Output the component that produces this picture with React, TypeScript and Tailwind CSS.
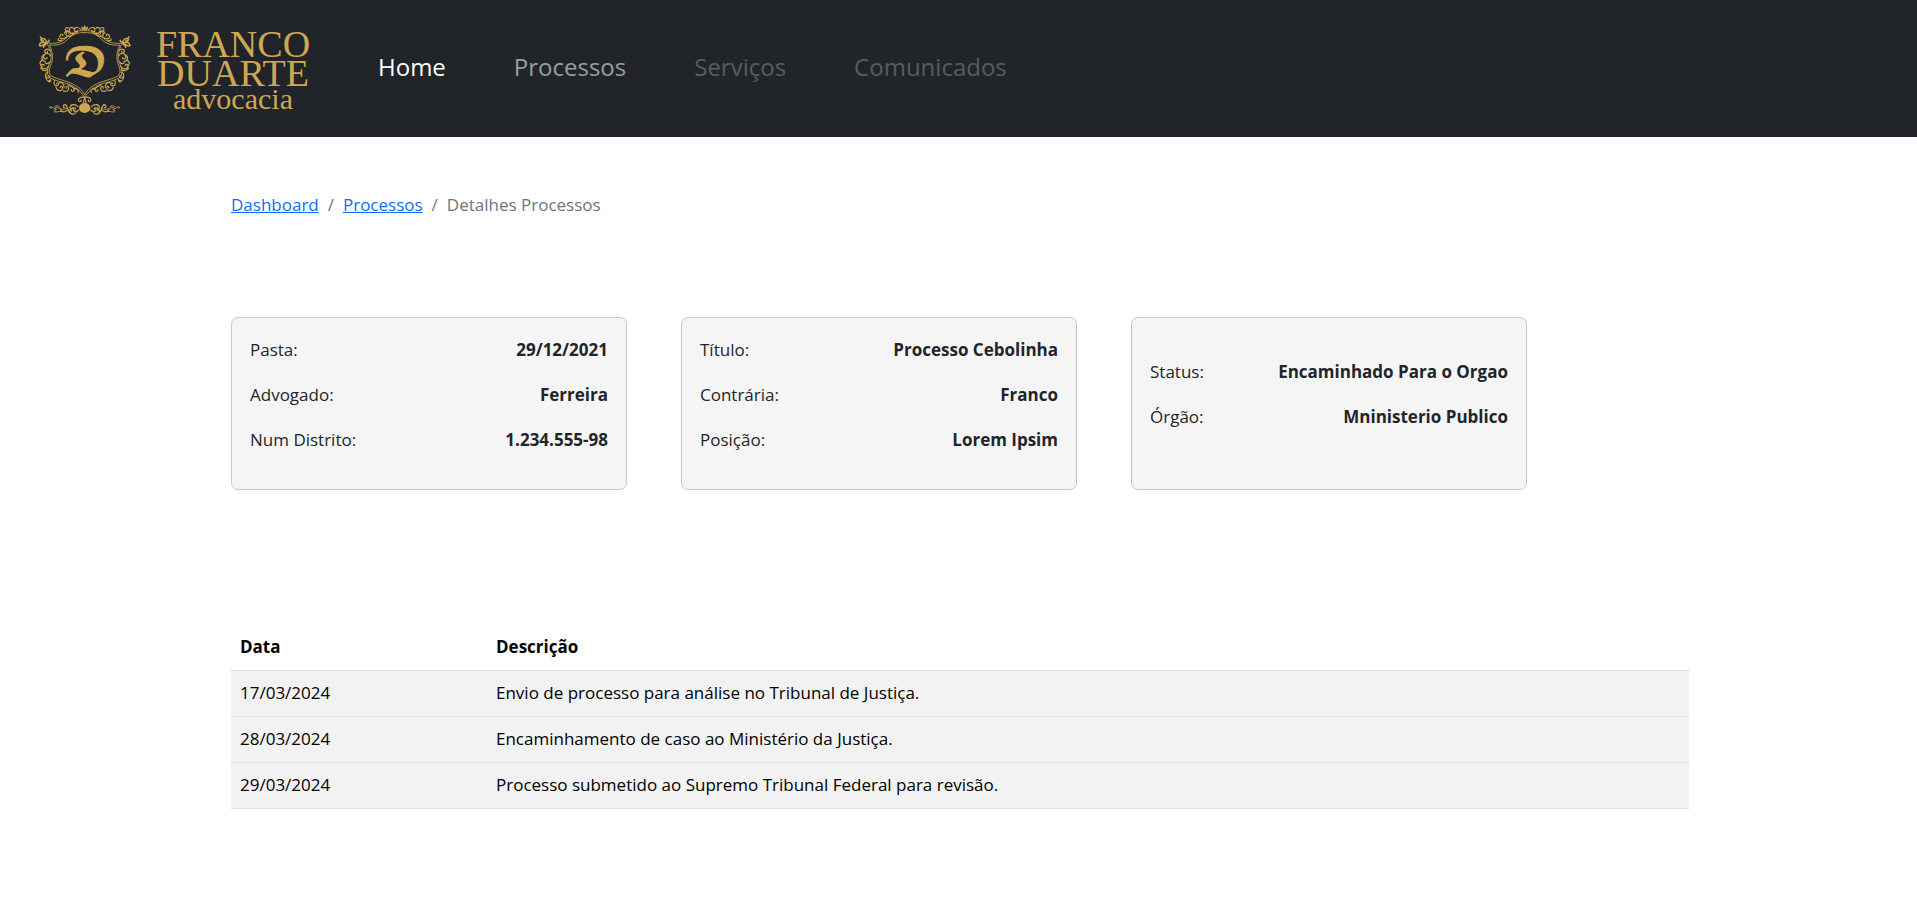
const navItems = [
  { label: 'Home', tone: 'text-white' },
  { label: 'Processos', tone: 'text-[#9b9d9e]' },
  { label: 'Serviços', tone: 'text-[#595c5f]' },
  { label: 'Comunicados', tone: 'text-[#595c5f]' },
];

const cards = [
  {
    align: 'pt-[9px]',
    rows: [
      ['Pasta:', '29/12/2021'],
      ['Advogado:', 'Ferreira'],
      ['Num Distrito:', '1.234.555-98'],
    ],
  },
  {
    align: 'pt-[9px]',
    rows: [
      ['Título:', 'Processo Cebolinha'],
      ['Contrária:', 'Franco'],
      ['Posição:', 'Lorem Ipsim'],
    ],
  },
  {
    align: 'pt-[31px]',
    rows: [
      ['Status:', 'Encaminhado Para o Orgao'],
      ['Órgão:', 'Mninisterio Publico'],
    ],
  },
];

const events = [
  ['17/03/2024', 'Envio de processo para análise no Tribunal de Justiça.'],
  ['28/03/2024', 'Encaminhamento de caso ao Ministério da Justiça.'],
  ['29/03/2024', 'Processo submetido ao Supremo Tribunal Federal para revisão.'],
];

function HalfFrame() {
  return (
    <g fill="none" stroke="#cda851" strokeLinecap="round" strokeLinejoin="round">
      {/* shield outline */}
      <g strokeWidth="2.5">
        <path d="M194 62 C168 60 150 70 138 84 C124 99 103 102 80 99 C88 112 95 128 93 146 C91 162 80 172 82 190 C86 210 116 212 144 222 C170 232 186 246 194 264" />
        <path d="M194 68 C170 66 154 76 142 89 C128 104 108 107 88 105 C96 120 99 134 97 150 C95 164 86 174 88 188 C92 204 120 207 147 217 C172 227 186 238 194 254" />
      </g>
      {/* top scrolls */}
      <g strokeWidth="3.5">
        <path d="M184 60 C176 50 164 50 163 59 C163 66 172 67 173 61" />
        <path d="M172 66 C162 74 151 72 148 64 C146 54 155 49 160 55" />
        <path d="M160 72 C148 84 136 80 138 70 C140 62 149 64 147 70" />
        <path d="M140 82 C126 90 117 86 120 77 C123 70 131 73 128 78" />
        <path d="M150 66 C142 60 136 62 133 70 M146 54 C138 50 134 56 137 61 M126 90 C118 94 113 92 115 86" />
      </g>
      {/* corner leaf */}
      <g strokeWidth="4.5">
        <path d="M80 100 C68 94 59 98 58 106 C62 110 70 106 76 101 M80 99 C80 90 72 82 64 87 C60 91 67 95 70 92 M80 100 C76 104 70 109 71 112 M82 96 C86 96 88 94 87 91" />
        <path d="M66 86 L61 81" />
      </g>
      {/* side scrolls */}
      <g strokeWidth="3.5">
        <path d="M90 122 C84 114 73 118 75 126 C78 132 85 128 82 124" />
        <path d="M92 138 C88 128 74 128 71 138 C69 148 80 150 81 143" />
        <path d="M72 134 C60 142 66 154 76 155 M68 150 C56 156 59 166 67 168" />
        <path d="M86 168 C82 178 68 180 64 170 C62 162 72 160 73 167" />
        <path d="M62 174 C66 182 76 184 84 179 M90 156 C84 162 78 162 76 158" />
        <path d="M84 186 C74 190 74 202 84 204 C91 204 91 196 85 197" />
        <path d="M78 200 C76 212 86 216 92 210 M92 208 C94 214 88 218 84 213" />
      </g>
      {/* lower scrolls */}
      <g strokeWidth="3.5">
        <path d="M104 211 C98 222 106 232 114 226 C119 221 113 216 110 221" />
        <path d="M108 232 C112 245 125 244 128 236 C129 228 121 227 121 233" />
        <path d="M118 218 C124 216 134 222 132 232 M130 242 C138 247 147 242 146 234 C144 227 137 229 138 235" />
        <path d="M144 224 C152 230 160 230 163 238 C163 246 153 246 154 239 M164 236 C173 236 178 242 174 247" />
        <path d="M194 262 C188 260 176 262 175 270 C176 277 185 275 183 270 M194 264 L190 278" />
      </g>
      {/* base flourish */}
      <g strokeWidth="3.5">
        <path d="M176 300 C168 308 158 304 160 296 C163 291 168 295 165 298" />
        <path d="M174 290 C164 280 151 283 150 292 C151 298 158 298 157 292" />
        <path d="M168 308 C160 316 147 312 149 302 C150 297 156 299 154 303" />
        <path d="M152 310 C140 304 146 288 136 284 C128 284 128 292 134 293 M142 300 C136 308 126 306 121 299" />
      </g>
      <g strokeWidth="2.5">
        <path d="M142 294 C130 304 118 292 108 292 C102 294 104 300 109 298 M132 306 C120 302 116 306 106 306 C100 305 102 300 106 301 M108 298 C100 296 96 288 89 291 C88 295 93 296 95 293 M118 290 C114 286 108 286 104 290" />
      </g>
    </g>
  );
}

function Logo() {
  return (
    <svg
      viewBox="0 0 300 120"
      className="h-[120px] w-[300px] shrink-0"
      role="img"
      aria-label="Franco Duarte advocacia"
    >
      <g transform="scale(0.33333)">
        <HalfFrame />
        <g transform="translate(388 0) scale(-1 1)">
          <HalfFrame />
        </g>
        <path
          d="M186 59 L183 48 L190 53 L194 44 L198 53 L205 48 L202 59 Z"
          fill="#cda851"
        />
        <ellipse cx="194" cy="294" rx="17" ry="15" fill="#cda851" />
      </g>
      <text
        x="65"
        y="66"
        textAnchor="middle"
        fontSize="38"
        fontFamily="'DejaVu Math TeX Gyre', 'DejaVu Serif', serif"
        fill="#cda851"
        stroke="#cda851"
        strokeWidth="1"
      >
        𝕯
      </text>
      <g fill="#cda851" textAnchor="middle" fontFamily="'Liberation Serif', serif">
        <text x="213" y="47" fontSize="38">FRANCO</text>
        <text x="213" y="76" fontSize="38">DUARTE</text>
        <text x="213" y="99" fontSize="30">advocacia</text>
      </g>
    </svg>
  );
}

export default function App() {
  return (
    <div className="min-h-screen bg-white font-['Open_Sans','Noto_Sans',sans-serif] text-[17px] leading-[26px] text-[#212529]">
      <header className="flex items-start bg-[#212529] pt-[10px] pb-[7px] pl-[20px]">
        <a href="#">
          <Logo />
        </a>
        <nav className="flex gap-[68px] pt-[37px] pl-[58px] text-[24px] leading-[40px]">
          {navItems.map((item) => (
            <a key={item.label} href="#" className={item.tone}>
              {item.label}
            </a>
          ))}
        </nav>
      </header>

      <main className="pr-[228px] pl-[231px]">
        <nav aria-label="breadcrumb" className="pt-[55px]">
          <ol className="flex gap-[9px] text-[#6c757d]">
            <li>
              <a href="#" className="text-[#0d6efd] underline">Dashboard</a>
            </li>
            <li aria-hidden="true">/</li>
            <li>
              <a href="#" className="text-[#0d6efd] underline">Processos</a>
            </li>
            <li aria-hidden="true">/</li>
            <li>Detalhes Processos</li>
          </ol>
        </nav>

        <section className="flex gap-[54px] pt-[99px]">
          {cards.map((card) => (
            <dl
              key={card.rows[0][0]}
              className={`h-[173px] w-[396px] rounded-[7px] border border-[#c8c8c8] bg-[#f5f5f5] px-[18px] ${card.align}`}
            >
              {card.rows.map(([label, value]) => (
                <div key={label} className="flex h-[45px] items-center justify-between">
                  <dt>{label}</dt>
                  <dd className="font-bold">{value}</dd>
                </div>
              ))}
            </dl>
          ))}
        </section>

        <table className="mt-[135px] w-full border-collapse text-left text-black">
          <thead>
            <tr className="h-[45px] border-b border-[#dee2e6]">
              <th className="w-[256px] px-[9px] font-bold">Data</th>
              <th className="px-[9px] font-bold">Descrição</th>
            </tr>
          </thead>
          <tbody>
            {events.map(([date, text]) => (
              <tr key={date} className="h-[46px] border-b border-[#dee2e6] bg-[#f2f2f2]">
                <td className="px-[9px]">{date}</td>
                <td className="px-[9px]">{text}</td>
              </tr>
            ))}
          </tbody>
        </table>
      </main>
    </div>
  );
}
